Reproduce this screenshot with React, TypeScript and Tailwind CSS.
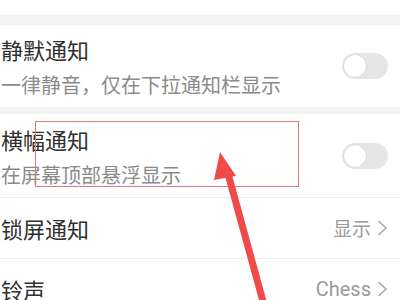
import React from "react";

function Toggle() {
  return (
    <div className="w-[46px] h-[26px] rounded-full bg-[#e6e6e6] flex items-center pl-[1px]">
      <div className="w-[24px] h-[24px] rounded-full bg-white border border-[#d8d8d8]" />
    </div>
  );
}

function Chevron() {
  return (
    <svg width="11" height="16" viewBox="0 0 11 16" className="ml-[6px]">
      <path d="M2 1.5 L9 8 L2 14.5" fill="none" stroke="#a8a8a8" strokeWidth="1.6" strokeLinecap="round" strokeLinejoin="round" />
    </svg>
  );
}

export default function App() {
  return (
    <div className="relative w-[400px] h-[300px] overflow-hidden bg-white font-['Noto_Sans_CJK_SC','Noto_Sans',sans-serif]">
      <div className="h-[15px] bg-white" />
      <div className="h-[10px] bg-[#f4f4f4]" />
      <div className="h-[82px] flex items-center justify-between pl-[1px] pr-[12px]">
        <div className="flex flex-col">
          <div className="text-[22px] leading-[30px] text-[#303030]">静默通知</div>
          <div className="text-[20px] leading-[26px] mt-[8px] text-[#8a8a8a]">一律静音，仅在下拉通知栏显示</div>
        </div>
        <Toggle />
      </div>
      <div className="h-[7px] bg-[#f4f4f4]" />
      <div className="h-[83px] flex items-center justify-between pl-[1px] pr-[12px]">
        <div className="flex flex-col">
          <div className="text-[22px] leading-[30px] text-[#303030]">横幅通知</div>
          <div className="text-[20px] leading-[26px] mt-[8px] text-[#8a8a8a]">在屏幕顶部悬浮显示</div>
        </div>
        <Toggle />
      </div>
      <div className="h-px bg-[#eeeeee]" />
      <div className="h-[60px] flex items-center justify-between pl-[1px] pr-[12px]">
        <div className="text-[22px] leading-[30px] text-[#303030]">锁屏通知</div>
        <div className="flex items-center text-[19px] text-[#9a9a9a]">
          <span>显示</span>
          <Chevron />
        </div>
      </div>
      <div className="h-px bg-[#eeeeee]" />
      <div className="h-[60px] flex items-center justify-between pl-[1px] pr-[12px]">
        <div className="text-[22px] leading-[30px] text-[#303030]">铃声</div>
        <div className="flex items-center text-[20px] text-[#9a9a9a] font-['Roboto','Noto_Sans_CJK_SC',sans-serif]">
          <span>Chess</span>
          <Chevron />
        </div>
      </div>

      <div className="absolute left-[35px] top-[121px] w-[264px] h-[66px] border-[1.5px] border-[#e07a7a]" />
      <svg className="absolute left-0 top-0" width="400" height="300" viewBox="0 0 400 300">
        <line x1="227" y1="170" x2="264" y2="305" stroke="#f04a4a" strokeWidth="7" />
        <polygon points="220,152 236,176 214,180" fill="#f04a4a" />
      </svg>
    </div>
  );
}
